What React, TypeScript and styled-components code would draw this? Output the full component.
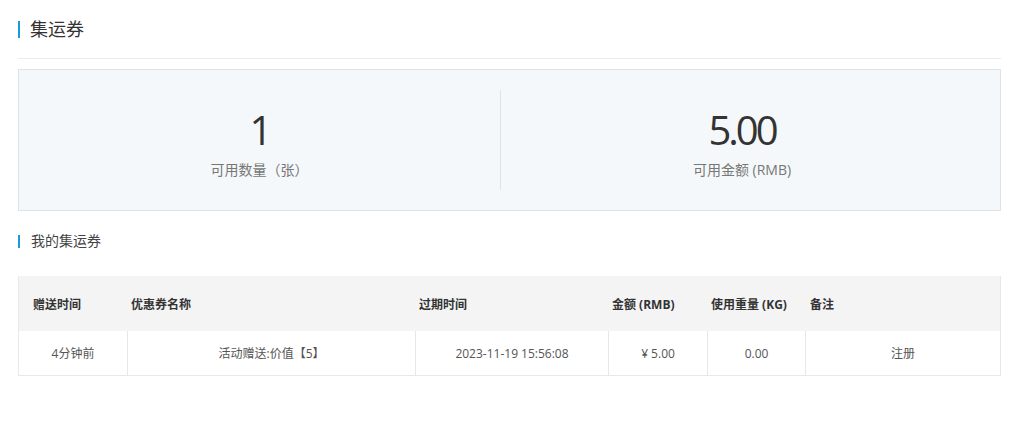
import styled, { createGlobalStyle } from 'styled-components';

const GlobalStyle = createGlobalStyle`
    body {
        margin: 0;
        background: #fff;
        font-family: "Open Sans", "Noto Sans CJK SC", sans-serif;
        color: #333;
    }
`

const Page = styled.div`
    padding: 0 20px 40px 18px;
`

const PageHeader = styled.div`
    display: flex;
    align-items: center;
    padding-top: 18px;
    padding-bottom: 18px;
    border-bottom: 1px solid #e9ecef;
`

const Title = styled.h1<{ $size: number }>`
    margin: 0;
    display: flex;
    align-items: center;
    font-weight: normal;
    font-size: ${({ $size }) => $size}px;
    line-height: 22px;
    color: ${({ $size }) => ($size > 14 ? '#333' : '#444')};

    &::before {
        content: '';
        display: inline-block;
        width: 2px;
        height: ${({ $size }) => ($size > 14 ? 17 : 13)}px;
        margin-right: ${({ $size }) => ($size > 14 ? 10 : 11)}px;
        background: #1a9ad6;
    }
`

const StatsBox = styled.div`
    margin-top: 10px;
    height: 142px;
    border: 1px solid #dde4e9;
    background: #f5f8fa;
    display: flex;
    padding: 20px 0;
    box-sizing: border-box;
`

const Stat = styled.div<{ $divider?: boolean }>`
    display: flex;
    flex-direction: column;
    align-items: center;
    ${({ $divider }) => ($divider
        ? 'width: 482px; border-right: 1px solid #dfe3e6; box-sizing: border-box;'
        : 'flex: 1; padding-right: 17px;')}
`

const StatValue = styled.div`
    margin-top: 16px;
    font-size: 40px;
    line-height: 48px;
    letter-spacing: -3px;
    color: #333;
`

const StatLabel = styled.div`
    margin-top: 6px;
    font-size: 14px;
    line-height: 20px;
    color: #777;
`

const Section = styled.div`
    margin-top: 19px;
`

const Table = styled.div`
    margin-top: 24px;
    border: 1px solid #e6e8ea;
    border-top: none;
`

const Row = styled.div<{ $head?: boolean }>`
    display: grid;
    grid-template-columns: 109px 288px 193px 99px 98px 1fr;
    height: ${({ $head }) => ($head ? 55 : 44)}px;
    background: ${({ $head }) => ($head ? '#f4f4f5' : '#fff')};
`

const HeadCell = styled.div<{ $pad: number }>`
    display: flex;
    align-items: center;
    padding-left: ${({ $pad }) => $pad}px;
    font-size: 12px;
    font-weight: bold;
    color: #333;
`

const Cell = styled.div<{ $last?: boolean }>`
    display: flex;
    align-items: center;
    justify-content: center;
    font-size: 12px;
    color: #555;
    border-right: ${({ $last }) => ($last ? 'none' : '1px solid #e6e8ea')};
`

const headers = [
    { label: '赠送时间', pad: 14 },
    { label: '优惠券名称', pad: 3 },
    { label: '过期时间', pad: 3 },
    { label: '金额 (RMB)', pad: 3 },
    { label: '使用重量 (KG)', pad: 3 },
    { label: '备注', pad: 4 },
]

const rows = [
    ['4分钟前', '活动赠送:价值【5】', '2023-11-19 15:56:08', '¥ 5.00', '0.00', '注册'],
]

export default function App() {
    return (
        <Page>
            <GlobalStyle />
            <PageHeader>
                <Title $size={18}>集运券</Title>
            </PageHeader>

            <StatsBox>
                <Stat $divider>
                    <StatValue>1</StatValue>
                    <StatLabel>可用数量（张）</StatLabel>
                </Stat>
                <Stat>
                    <StatValue>5.00</StatValue>
                    <StatLabel>可用金额 (RMB)</StatLabel>
                </Stat>
            </StatsBox>

            <Section>
                <Title $size={14}>我的集运券</Title>
            </Section>

            <Table>
                <Row $head>
                    {headers.map(h => <HeadCell key={h.label} $pad={h.pad}>{h.label}</HeadCell>)}
                </Row>
                {rows.map((r, i) => (
                    <Row key={i}>
                        {r.map((c, j) => <Cell key={j} $last={j === r.length - 1}>{c}</Cell>)}
                    </Row>
                ))}
            </Table>
        </Page>
    );
}
